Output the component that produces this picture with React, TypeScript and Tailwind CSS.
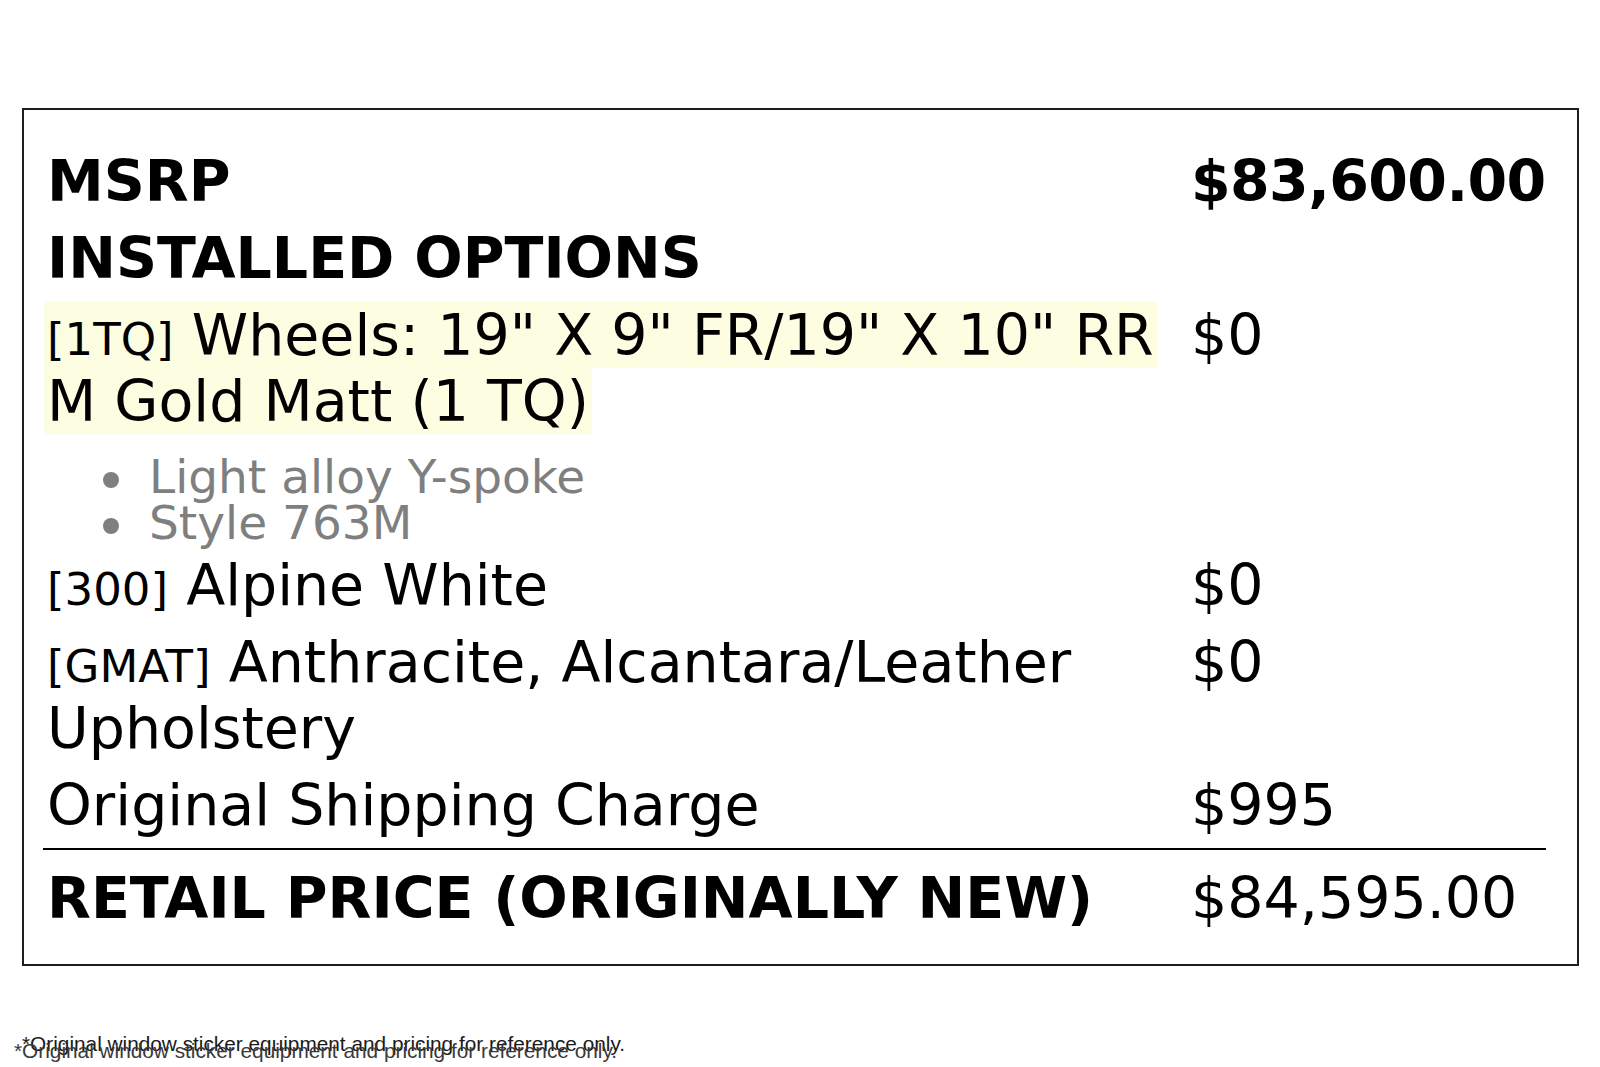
const font = { fontFamily: '"DejaVu Sans", Verdana, sans-serif' };

type Row = {
  code?: string;
  label: string;
  price: string;
  bold?: boolean;
  highlight?: boolean;
  notes?: string[];
};

const rows: Row[] = [
  { label: 'MSRP', price: '$83,600.00', bold: true },
  { label: 'INSTALLED OPTIONS', price: '', bold: true },
  {
    code: '[1TQ]',
    label: 'Wheels: 19" X 9" FR/19" X 10" RR M Gold Matt (1 TQ)',
    price: '$0',
    highlight: true,
    notes: ['Light alloy Y-spoke', 'Style 763M'],
  },
  { code: '[300]', label: 'Alpine White', price: '$0' },
  { code: '[GMAT]', label: 'Anthracite, Alcantara/Leather Upholstery', price: '$0' },
  { label: 'Original Shipping Charge', price: '$995' },
];

const OptionRow = ({ row }: { row: Row }) => {
  const text = (
    <>
      {row.code && <span className="text-[45px] leading-none">{row.code}</span>}
      {row.code && ' '}
      {row.label}
    </>
  );

  return (
    <div className={`grid grid-cols-[1144px_359px] ${row.notes ? 'pt-[5.5px]' : 'py-[5.5px]'}`}>
      <div className={row.highlight ? 'pl-[1px] pr-[4px]' : 'px-[4px]'}>
        <div className={row.bold ? 'font-bold' : ''}>
          {row.highlight ? (
            <span className="bg-[#fdfde1] px-[3px] box-decoration-clone">{text}</span>
          ) : (
            text
          )}
        </div>
        {row.notes && (
          <ul className="mt-[20px] pl-[59px] text-[47px] leading-[46px] text-[#7f7f7f]">
            {row.notes.map((n) => (
              <li key={n} className="flex gap-[30px]">
                <span className="mt-[18px] h-4 w-4 shrink-0 rounded-full bg-[#7f7f7f]" />
                <span>{n}</span>
              </li>
            ))}
          </ul>
        )}
      </div>
      <div className={`px-[4px] ${row.bold ? 'font-bold tracking-[-0.6px]' : ''}`}>{row.price}</div>
    </div>
  );
};

export default function App() {
  return (
    <div className="relative min-h-[1067px] w-[1600px] bg-white text-black" style={font}>
      <div className="ml-[22px] pt-[108px]">
        <div className="w-[1557px] border-2 border-[#1e1e1e] pt-[32.5px] pb-[33px] pl-[19px] text-[57px] leading-[66px]">
          <div className="w-[1503px]">
            {rows.map((r) => (
              <OptionRow key={r.label} row={r} />
            ))}
            <div className="mt-[5px] grid grid-cols-[1144px_359px] border-t-2 border-black pt-[15px] font-bold">
              <div className="px-[4px]">RETAIL PRICE (ORIGINALLY NEW)</div>
              <div className="px-[4px] font-normal">$84,595.00</div>
            </div>
          </div>
        </div>
      </div>

      {/* footnote is printed twice, slightly offset */}
      <div
        className="absolute left-[22px] top-[1032px] whitespace-nowrap text-[20.8px] leading-[24px] text-[#1a1a1a]"
        style={{ fontFamily: '"Liberation Sans", Arial, sans-serif' }}
      >
        *Original window sticker equipment and pricing for reference only.
      </div>
      <div
        className="absolute left-[14px] top-[1039px] whitespace-nowrap text-[20.8px] leading-[24px] text-[#3a3a3a]"
        style={{ fontFamily: '"Liberation Sans", Arial, sans-serif' }}
      >
        *Original window sticker equipment and pricing for reference only.
      </div>
    </div>
  );
}
